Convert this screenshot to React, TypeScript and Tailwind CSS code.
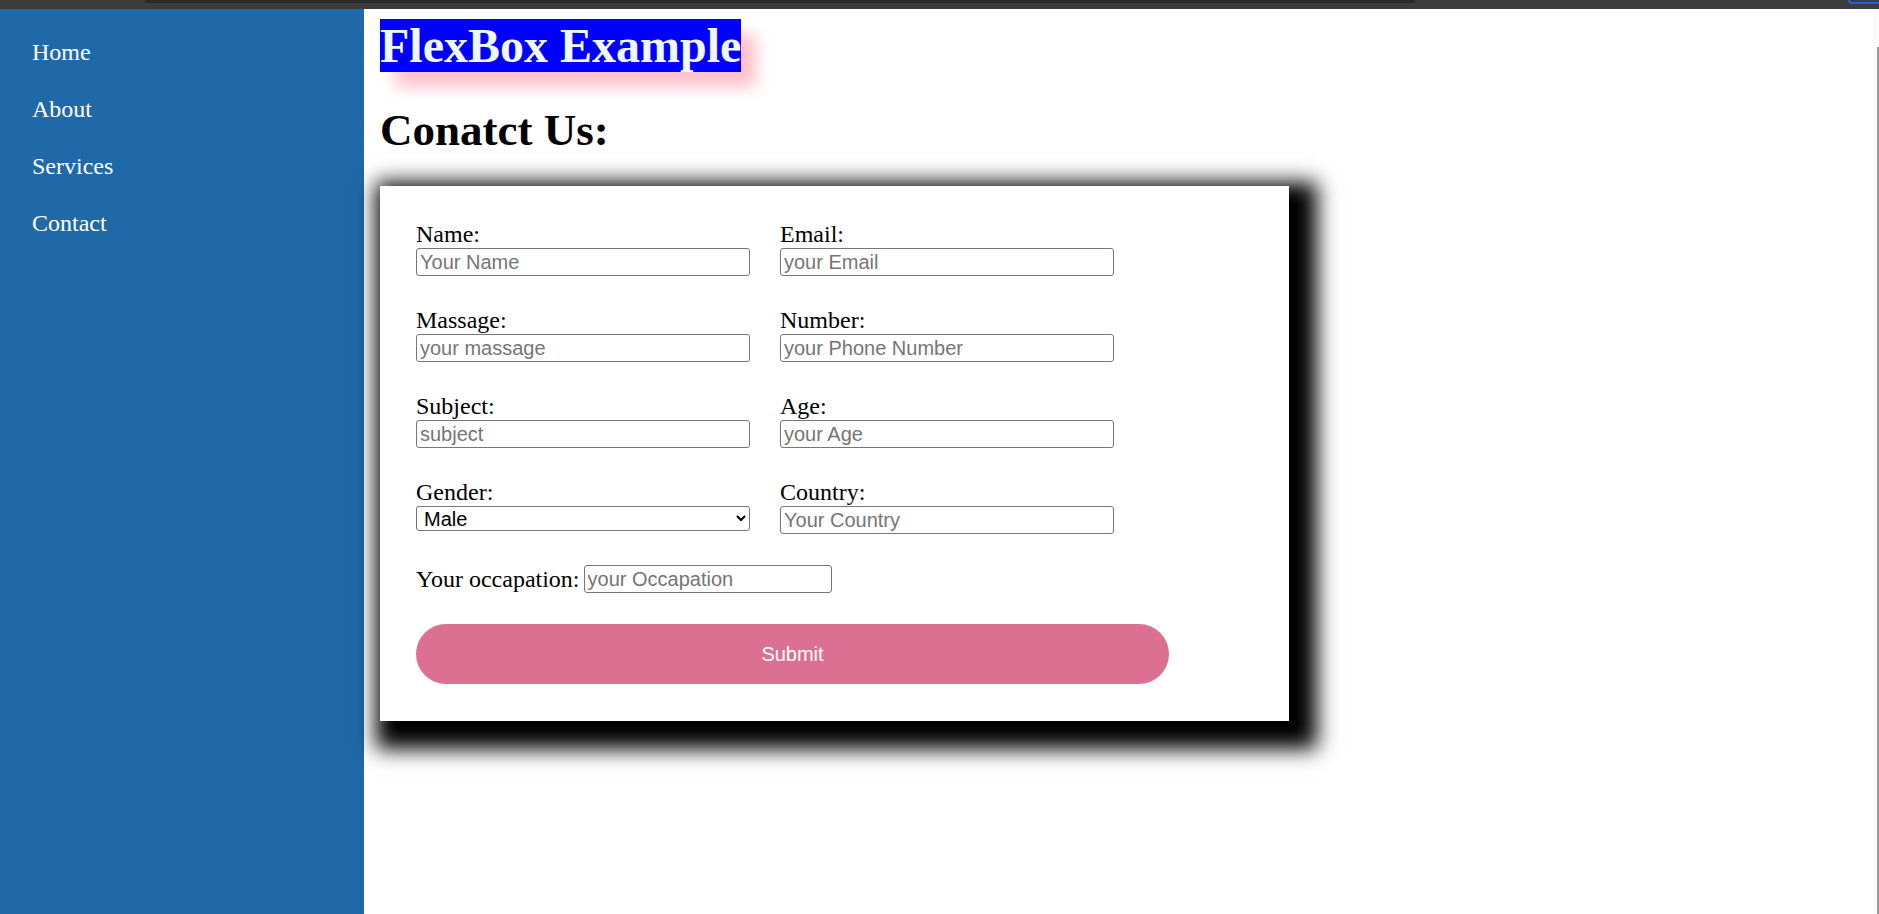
import React from "react";

const navLinks = ["Home", "About", "Services", "Contact"];

const inputClass =
  "h-[28px] w-[334px] rounded-[3px] border border-[#767676] bg-white px-[3px] text-[20px] leading-[22px] text-black outline-none placeholder:text-[#757575] font-['Liberation_Sans',Arial,sans-serif]";

const Field = ({ label, placeholder }: { label: string; placeholder: string }) => {
  return (
    <div className="flex flex-col">
      <label className="text-[24px] leading-[28px]">{label}</label>
      <input className={inputClass} type="text" placeholder={placeholder} />
    </div>
  );
};

const App = () => {
  const [gender, setGender] = React.useState("male");

  return (
    <div className="flex min-h-screen flex-col bg-white font-['Liberation_Serif','Times_New_Roman',serif] text-black">
      {/* browser chrome strip */}
      <div className="relative flex h-[9px] bg-[#3c3c3c]">
        <div className="ml-[145px] h-[3px] w-[1270px] rounded-b-[6px] bg-[#2a2a2a]"></div>
        <div className="ml-auto h-[4px] w-[31px] rounded-bl-[8px] border-b-2 border-l-2 border-[#1f5fe0]"></div>
      </div>

      <div className="flex flex-1">
        <aside className="w-[364px] shrink-0 bg-[#1f69a9] pl-[32px] pt-[30px]">
          <ul className="flex flex-col gap-[30px]">
            {navLinks.map((link) => (
              <li key={link} className="text-[24px] leading-[27px]">
                <a href="#" className="text-white">
                  {link}
                </a>
              </li>
            ))}
          </ul>
        </aside>

        <main className="flex-1 pl-[16px] pt-[10px]">
          <h1 className="w-fit bg-[#0000ff] text-[48px] font-bold leading-[53px] text-[#f0f8ff] shadow-[15px_15px_15px_#ffc0cb]">
            FlexBox Example
          </h1>
          <h2 className="mt-[33px] text-[45px] font-bold leading-[50px]">Conatct Us:</h2>

          <form
            className="mt-[31px] w-[909px] bg-white pb-[37px] pl-[36px] pt-[34px] shadow-[12px_12px_20px_16px_#000]"
            action=""
          >
            <div className="grid grid-cols-[334px_334px] gap-x-[30px] gap-y-[30px]">
              <Field label="Name:" placeholder="Your Name" />
              <Field label="Email:" placeholder="your Email" />
              <Field label="Massage:" placeholder="your massage" />
              <Field label="Number:" placeholder="your Phone Number" />
              <Field label="Subject:" placeholder="subject" />
              <Field label="Age:" placeholder="your Age" />
              <div className="flex flex-col">
                <label className="text-[24px] leading-[28px]">Gender:</label>
                <select
                  value={gender}
                  onChange={(e) => setGender(e.target.value)}
                  className="h-[25px] w-[334px] rounded-[3px] border border-[#767676] bg-white pl-[3px] text-[20px] leading-[22px] text-black outline-none font-['Liberation_Sans',Arial,sans-serif]"
                >
                  <option value="male">Male</option>
                  <option value="female">Female</option>
                </select>
              </div>
              <Field label="Country:" placeholder="Your Country" />
            </div>

            <div className="mt-[31px] flex h-[28px] items-center gap-[4px]">
              <label className="text-[24px] leading-[28px]">Your occapation:</label>
              <input
                className={inputClass.replace("w-[334px]", "w-[248px]")}
                type="text"
                placeholder="your Occapation"
              />
            </div>

            <button
              type="button"
              className="mt-[31px] h-[60px] w-[753px] rounded-full bg-[#db7093] text-[20px] text-white font-['Liberation_Sans',Arial,sans-serif]"
            >
              Submit
            </button>
          </form>
        </main>

        {/* scrollbar edge */}
        <div className="w-[6px] shrink-0 bg-[#fafafa] pt-[38px]">
          <div className="ml-auto h-full w-[2px] bg-[#9a9a9a]"></div>
        </div>
      </div>
    </div>
  );
};

export default App;
